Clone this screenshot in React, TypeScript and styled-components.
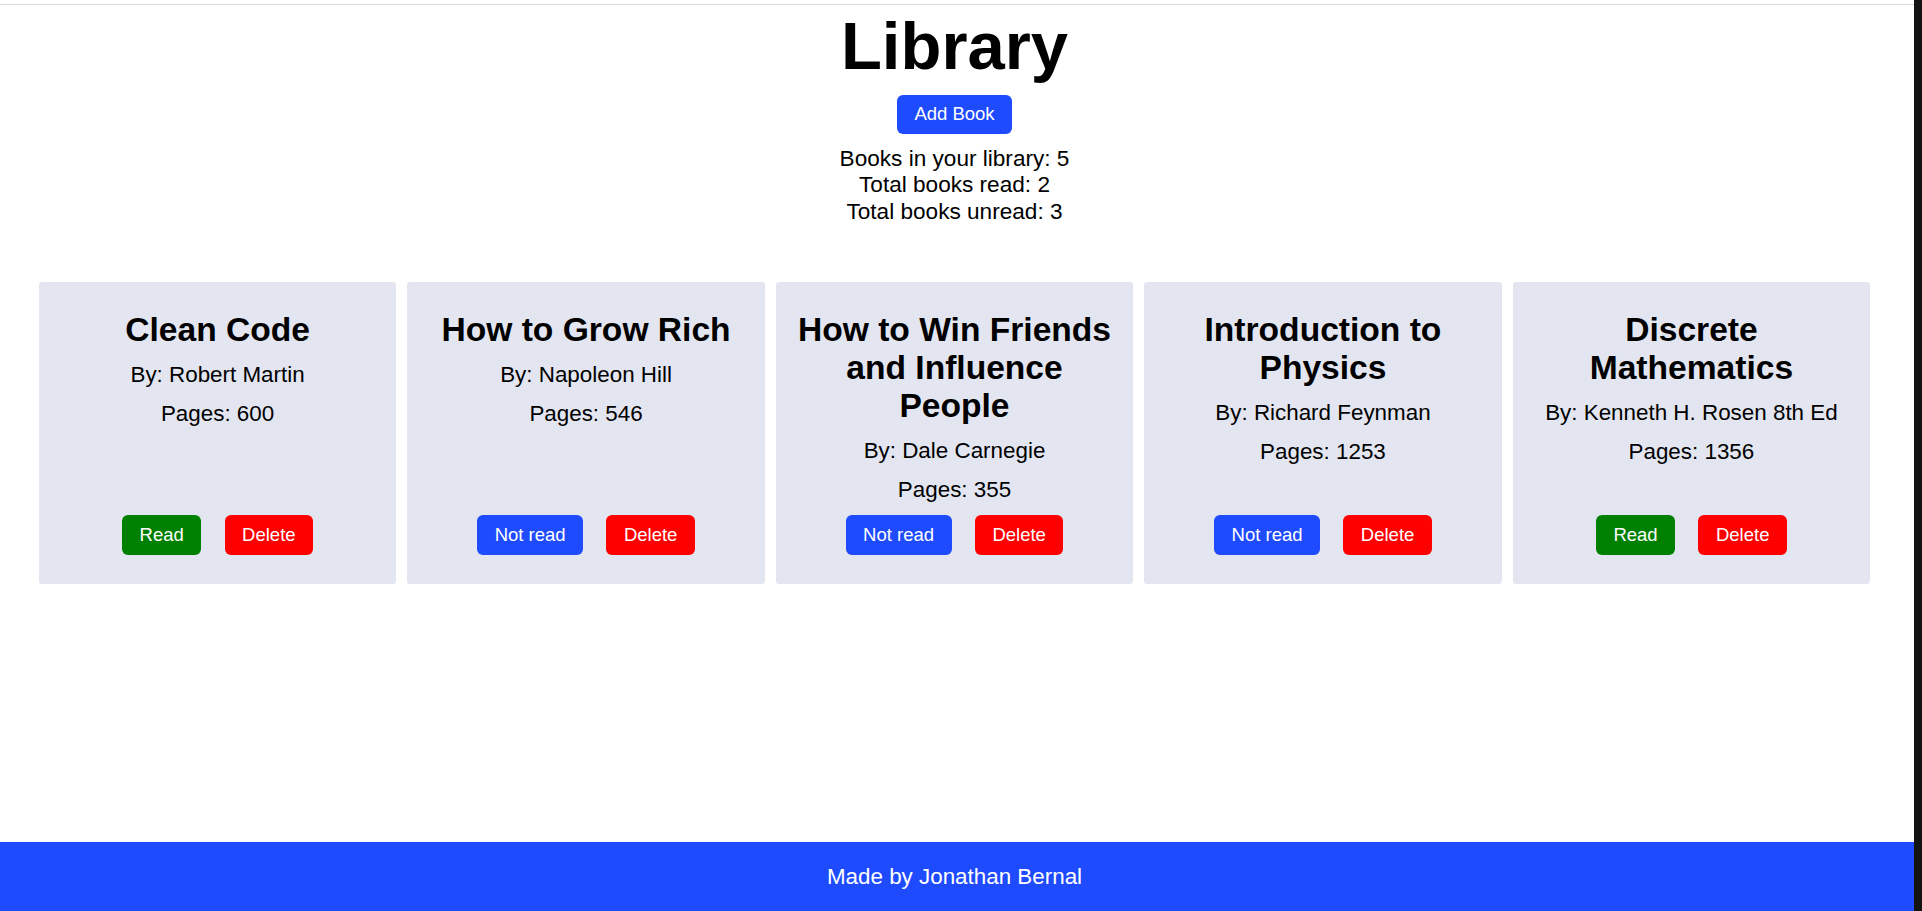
import React from "react";
import styled, { createGlobalStyle } from "styled-components";

const GlobalStyle = createGlobalStyle`
  html, body {
    margin: 0;
    padding: 0;
    background: #ffffff;
    font-family: "Liberation Sans", Arial, sans-serif;
    color: #000000;
  }
  * { box-sizing: border-box; }
`;

const Screen = styled.div`
  display: flex;
  min-height: 100vh;
`;

const Page = styled.div`
  flex: 1;
  display: flex;
  flex-direction: column;
  min-width: 0;
`;

const EdgeStrip = styled.div`
  width: 8px;
  flex: none;
  background: #131313;
`;

const TopRule = styled.div`
  height: 5px;
  border-bottom: 1px solid #dcdcdc;
`;

const Main = styled.main`
  flex: 1;
  padding: 0 44px 0 39px;
`;

const Header = styled.header`
  display: flex;
  flex-direction: column;
  align-items: center;
  text-align: center;
`;

const Title = styled.h1`
  margin: 1.5px 0 0;
  font-size: 67px;
  font-weight: 700;
  line-height: normal;
`;

type Variant = "primary" | "read" | "danger";

const variantColors: Record<Variant, string> = {
  primary: "#1f4bff",
  read: "#008000",
  danger: "#ff0000",
};

const Button = styled.button<{ $variant: Variant }>`
  font-family: "Liberation Sans", Arial, sans-serif;
  font-size: 18.5px;
  line-height: normal;
  padding: 8.6px 17.5px;
  border: none;
  border-radius: 6px;
  color: #ffffff;
  cursor: pointer;
  background: ${(p) => variantColors[p.$variant]};
`;

const AddButton = styled(Button)`
  margin-top: 11px;
`;

const Stats = styled.div`
  margin-top: 12px;
  font-size: 22.6px;
  line-height: 26.6px;
`;

const CardGrid = styled.section`
  margin-top: 57px;
  display: grid;
  grid-template-columns: repeat(5, 1fr);
  gap: 11.3px;
`;

const Card = styled.article`
  background: #e3e6f0;
  border-radius: 3px;
  padding: 29px 16px;
  display: flex;
  flex-direction: column;
  align-items: center;
  text-align: center;
`;

const CardTitle = styled.h2`
  margin: 0;
  font-size: 33.6px;
  font-weight: 700;
  line-height: normal;
`;

const Meta = styled.p<{ $first?: boolean }>`
  margin: ${(p) => (p.$first ? "13px" : "12.5px")} 0 0;
  font-size: 22.4px;
  line-height: normal;
`;

const Actions = styled.div`
  margin-top: auto;
  padding-top: 12.5px;
  display: flex;
  justify-content: center;
  gap: 23.3px;
`;

const Footer = styled.footer`
  height: 69px;
  background: #1f4bff;
  color: #ffffff;
  font-size: 22.4px;
  display: flex;
  align-items: center;
  justify-content: center;
  padding-right: 5px;
`;

type Book = { title: string; author: string; pages: number; read: boolean };

const books: Book[] = [
  { title: "Clean Code", author: "Robert Martin", pages: 600, read: true },
  { title: "How to Grow Rich", author: "Napoleon Hill", pages: 546, read: false },
  {
    title: "How to Win Friends and Influence People",
    author: "Dale Carnegie",
    pages: 355,
    read: false,
  },
  { title: "Introduction to Physics", author: "Richard Feynman", pages: 1253, read: false },
  {
    title: "Discrete Mathematics",
    author: "Kenneth H. Rosen 8th Ed",
    pages: 1356,
    read: true,
  },
];

export default function App() {
  const readCount = books.filter((b) => b.read).length;
  return (
    <>
      <GlobalStyle />
      <Screen>
        <Page>
          <TopRule />
          <Main>
            <Header>
              <Title>Library</Title>
              <AddButton $variant="primary">Add Book</AddButton>
              <Stats>
                <div>Books in your library: {books.length}</div>
                <div>Total books read: {readCount}</div>
                <div>Total books unread: {books.length - readCount}</div>
              </Stats>
            </Header>
            <CardGrid>
              {books.map((b) => (
                <Card key={b.title}>
                  <CardTitle>{b.title}</CardTitle>
                  <Meta $first>By: {b.author}</Meta>
                  <Meta>Pages: {b.pages}</Meta>
                  <Actions>
                    <Button $variant={b.read ? "read" : "primary"}>
                      {b.read ? "Read" : "Not read"}
                    </Button>
                    <Button $variant="danger">Delete</Button>
                  </Actions>
                </Card>
              ))}
            </CardGrid>
          </Main>
          <Footer>Made by Jonathan Bernal</Footer>
        </Page>
        <EdgeStrip />
      </Screen>
    </>
  );
}
